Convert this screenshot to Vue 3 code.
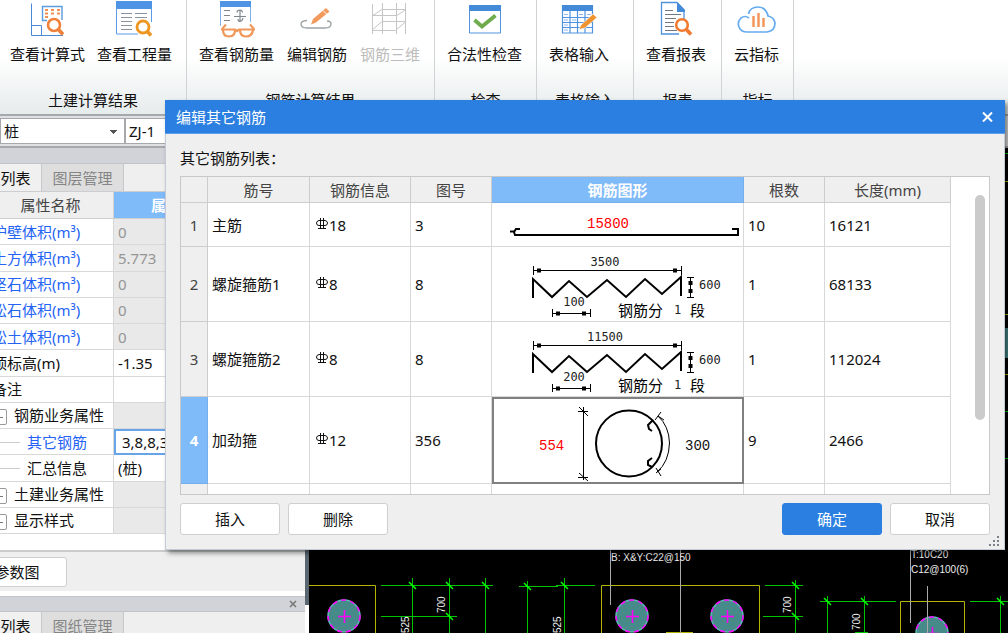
<script setup>
import { ref } from 'vue'

const ribbon = [
  { title: '土建计算结果', cls: 'g-calc', items: [
    { icon: 'formula', label: '查看计算式' },
    { icon: 'quantity', label: '查看工程量' },
  ] },
  { title: '钢筋计算结果', cls: 'g-rebar', items: [
    { icon: 'glasses', label: '查看钢筋量' },
    { icon: 'edit', label: '编辑钢筋' },
    { icon: 'mesh', label: '钢筋三维', disabled: true },
  ] },
  { title: '检查', cls: 'g-check', items: [{ icon: 'check', label: '合法性检查' }] },
  { title: '表格输入', cls: 'g-table', items: [{ icon: 'table', label: '表格输入' }] },
  { title: '报表', cls: 'g-report', items: [{ icon: 'report', label: '查看报表' }] },
  { title: '指标', cls: 'g-cloud', items: [{ icon: 'cloud', label: '云指标' }] },
]

const props = [
  { name: '护壁体积(m³)', value: '0', link: true, ro: true },
  { name: '土方体积(m³)', value: '5.773', link: true, ro: true },
  { name: '坚石体积(m³)', value: '0', link: true, ro: true },
  { name: '松石体积(m³)', value: '0', link: true, ro: true },
  { name: '松土体积(m³)', value: '0', link: true, ro: true },
  { name: '顶标高(m)', value: '-1.35' },
  { name: '备注', value: '' },
  { name: '钢筋业务属性', value: '', group: true, ro: true },
  { name: '其它钢筋', value: '3,8,8,356', child: true, link: true, active: true },
  { name: '汇总信息', value: '(桩)', child: true },
  { name: '土建业务属性', value: '', group: true, ro: true },
  { name: '显示样式', value: '', group: true, ro: true },
]

const bars = [
  { name: '主筋', dia: '18', fig: '3', count: '10', len: '16121', shape: 'straight', main: '15800' },
  { name: '螺旋箍筋1', dia: '8', fig: '8', count: '1', len: '68133', shape: 'spiral', main: '3500', pitch: '100' },
  { name: '螺旋箍筋2', dia: '8', fig: '8', count: '1', len: '112024', shape: 'spiral', main: '11500', pitch: '200' },
  { name: '加劲箍', dia: '12', fig: '356', count: '9', len: '2466', shape: 'ring', main: '554' },
]
const selected = ref(3)
const component = ref('桩')
const member = ref('ZJ-1')
</script>

<template>
  <div class="app">
    <header class="ribbon">
      <section v-for="g in ribbon" :key="g.title" class="group" :class="g.cls">
        <div class="items">
          <button v-for="it in g.items" :key="it.label" class="tool" :disabled="it.disabled">
            <svg class="icon" viewBox="0 0 38 38" width="38" height="38" fill="none">
              <g v-if="it.icon === 'formula'">
                <path d="M2.500 3.500V35.500H34M2.500 25.500H12.500V35.500" stroke="#4a8ad4" />
                <path d="M18 20.500H13.500V6.500H33V20" stroke="#5b9be0" stroke-width="1.400" />
                <path d="M16 10H19M22 10H25M28 10H31M16 13.500H19M22 13.500H25M28 13.500H31M16 17H19" stroke="#f09050" stroke-width="2" />
                <circle cx="25" cy="25" r="6" stroke="#f0813a" stroke-width="2.600" fill="#fff" />
                <path d="M29 29L34 34.500" stroke="#f0813a" stroke-width="3.600" />
              </g>
              <g v-else-if="it.icon === 'quantity'">
                <path d="M0 1H36V9H0Z" fill="#4f93e4" />
                <path d="M.5 8V34H22M35.500 8V22" stroke="#5b9be8" />
                <path d="M5 13.500H16M19 13.500H31M5 17.500H16M19 17.500H31M5 21.500H16M5 25.500H16M5 29.500H16" stroke="#8a949c" />
                <circle cx="27" cy="27" r="6" stroke="#ee9522" stroke-width="2.800" fill="#fff" />
                <path d="M31 31L35 35.500" stroke="#ee9522" stroke-width="3.600" />
              </g>
              <g v-else-if="it.icon === 'glasses'">
                <path d="M2 1H33V7H2Z" fill="#4f93e4" />
                <path d="M2.500 7V26M32.500 7V22" stroke="#7fb0ec" />
                <path d="M6 10.500H12M6 15.500H12M6 20.500H12M16 16.500H28M22 10V21M19 12.500Q19 10 22 10Q24 10 24.500 12.500M20 19Q20 21.500 22 21.500Q24.500 21 25 18" stroke="#7e868c" stroke-width="1.200" />
                <path d="M8 24.500L4 29M32 24.500L36 29" stroke="#f0975a" stroke-width="2" />
                <path d="M3 29.500H17L19 31L21 29.500H37M5 30Q5 36.500 11 36.500Q17 36.500 17 30M22 30Q22 36.500 28 36.500Q34 36.500 35 30" stroke="#f0975a" stroke-width="2.200" />
              </g>
              <g v-else-if="it.icon === 'edit'">
                <path d="M9 20.500Q3 21 3 24Q3 28 9 28H27Q33 28 33 24Q33 21 29 21" stroke="#9aa2a6" stroke-width="1.300" />
                <path d="M13 24.500L15 19L28 8L31.500 11.500L18 22.500Z" fill="#f29a5c" />
                <path d="M25 10.500L29 14.500" stroke="#fff" />
              </g>
              <g v-else-if="it.icon === 'mesh'" stroke="#c6c6c6">
                <path d="M1.500 4V34M11.500 3V34M25.500 3V34M34.500 3V34M1 15.500H25M1 30.500H25M11 9.500H35M11 21.500H35M1 16L11 9.500M1 30L11 21.500M25 16L35 9.500M25 30L35 21.500" />
              </g>
              <g v-else-if="it.icon === 'check'">
                <path d="M3.500 5.500H34.500V33H3.500Z" fill="#fff" stroke="#5293de" />
                <path d="M3 5H35V11H3Z" fill="#438ad8" />
                <path d="M8.500 20L16 26.500L29.500 15.500" stroke="#6fac4d" stroke-width="3.800" />
              </g>
              <g v-else-if="it.icon === 'table'">
                <path d="M2.500 5.500H32.500V33H2.500ZM2 17.500H33M2 22.500H33M2 27.500H33M10 11V33M17.500 11V33M25 11V33" fill="#fff" stroke="#4f93e0" stroke-width="1.200" />
                <path d="M2 5H33V11H2Z" fill="#438ad8" />
                <path d="M4 14.500H8M4 20H8M4 25H8M4 30H8M12 20H16M19 14.500H23M27 14.500H31" stroke="#8db8ed" />
                <path d="M19 29.500L21 25L33 14L37 17.500L25 28Z" fill="#ef9230" stroke="#fff" stroke-width=".6" />
              </g>
              <g v-else-if="it.icon === 'report'">
                <path d="M27 20V10L20 2.500H4.500V34H22" fill="#fff" stroke="#4f91dc" stroke-width="1.300" />
                <path d="M20 2L28 10V12H20Z" fill="#438ad8" />
                <path d="M8 10.500H16M8 14.500H24M8 18.500H19M8 22.500H17M8 26.500H17M8 30.500H20" stroke="#6f7c86" />
                <circle cx="25" cy="25" r="5.800" stroke="#f07a30" stroke-width="2.600" fill="#fff" />
                <path d="M29 29L34 34.500" stroke="#f07a30" stroke-width="3.600" />
              </g>
              <g v-else>
                <path d="M11 18Q7 15 3 18Q-1 22 1 27Q3 32 9 32H29Q37 31 37 23Q36 17 30 16Q28 7 20 7Q12 7 10.500 14" stroke="#66abf0" stroke-width="1.700" />
                <path d="M15.500 16V27M20.500 13V27M25.500 18V27" stroke="#f29455" stroke-width="2.400" />
              </g>
            </svg>
            <span>{{ it.label }}</span>
          </button>
        </div>
        <div class="group-title">{{ g.title }}</div>
      </section>
    </header>

    <div class="toolbar">
      <select v-model="component" class="combo" aria-label="构件类型"><option>桩</option></select>
      <select v-model="member" class="combo" aria-label="构件名称"><option>ZJ-1</option></select>
    </div>

    <div class="workspace">
      <aside class="side">
        <div class="caption"></div>
        <nav class="tabs">
          <button class="tab current">属性列表</button>
          <button class="tab">图层管理</button>
        </nav>
        <table class="props">
          <thead>
            <tr><th class="c-no"></th><th class="c-name">属性名称</th><th class="c-value">属性值</th><th></th></tr>
          </thead>
          <tbody>
            <tr v-for="p in props" :key="p.name">
              <td></td>
              <td :class="{ link: p.link, parent: p.group, child: p.child }">
                <button v-if="p.group" class="fold" :aria-label="p.name"></button>
                <i v-if="p.child" class="branch"></i>{{ p.name }}
              </td>
              <td :class="{ ro: p.ro, active: p.active }">{{ p.value }}</td>
              <td :class="{ ro: p.ro }"></td>
            </tr>
          </tbody>
        </table>
        <div class="blank"></div>
        <div class="side-foot"><button class="btn">参数图</button></div>
        <div class="caption lower"><button class="mini-close" aria-label="关闭">
          <svg width="8" height="8" viewBox="0 0 8 8"><path d="M1 1L7 7M7 1L1 7" stroke="#777" stroke-width="1.600" /></svg>
        </button></div>
        <nav class="tabs">
          <button class="tab current">构件列表</button>
          <button class="tab">图纸管理</button>
        </nav>
      </aside>
      <div class="splitter"></div>
      <main class="canvas">
        <svg width="699" height="485" viewBox="309 148 699 485" fill="none">
          <g stroke="#b4b400">
            <path d="M309 585.500H375.500V633M601.500 633V585.500H759.500V633M900.500 633V601.500H964.500V633M666 632.500H693M1004 181.500H1008M1004 314.500H1008M1004 374.500H1008" />
          </g>
          <g stroke="#00c400">
            <path d="M381 585.500H493M412.500 578V633M449.500 578V633M485.500 578V633M381 616.500H457M519 586.500H558M556 585.500H595M527.500 581V633M564.500 578V633" />
            <path d="M765 585.500H803M795.500 580V633M763 616.500H803M820 601.500H896M827.500 596V633M864.500 596V633M855 632.500H868M970 601.500H1008M1000.500 596V633M1004 153.500H1008M1004 411.500H1008M1004 458.500H1008" />
            <path d="M409 582L416 589M446 582L453 589M482 582L489 589M446 613L453 620M524 583L531 590M561 582L568 589M792 582L799 589M792 613L799 620M824 598L831 605M861 598L868 605M997 598L1004 605" stroke="#00ff00" stroke-width="1.500" />
          </g>
          <g v-for="c in [[344, 616], [632, 616], [727, 616], [932, 633]]" :key="c[0]">
            <circle :cx="c[0]" :cy="c[1]" r="16" fill="#478a8a" stroke="#60b8b8" stroke-width="1.500" />
            <circle :cx="c[0]" :cy="c[1]" r="16" stroke="#f0f" stroke-width="1.500" stroke-dasharray="5 4" />
            <path :d="`M${c[0] - 6} ${c[1] + .5}h13M${c[0] + .5} ${c[1] - 6}v13`" stroke="#f0f" stroke-width="1.500" />
          </g>
          <path d="M610.500 548V605M680.500 548V633M910.500 548V623M927.500 586V633" stroke="#aaa" />
          <path d="M1004 328H1008V358H1004Z" fill="#478a8a" />
          <g class="cad">
            <text x="611" y="561">B: X&amp;Y:C22@150</text>
            <text x="911" y="558">T:10C20</text>
            <text x="911" y="573">C12@100(6)</text>
            <text transform="translate(445 613) rotate(-90)">700</text>
            <text transform="translate(409 633) rotate(-90)">525</text>
            <text transform="translate(561 633) rotate(-90)">525</text>
            <text transform="translate(791 613) rotate(-90)">700</text>
            <text transform="translate(860 630) rotate(-90)">700</text>
          </g>
        </svg>
      </main>
    </div>

    <div class="dialog" role="dialog" aria-label="编辑其它钢筋">
      <div class="titlebar">
        <span>编辑其它钢筋</span>
        <button class="close" aria-label="关闭">
          <svg width="11" height="10" viewBox="0 0 11 10"><path d="M1 .5L10 9.500M10 .5L1 9.500" stroke="#fff" stroke-width="2" /></svg>
        </button>
      </div>
      <div class="body">
        <div class="list-label">其它钢筋列表：</div>
        <div class="frame">
          <table class="bars">
            <thead>
              <tr>
                <th class="w-no"></th><th class="w-name">筋号</th><th class="w-info">钢筋信息</th><th class="w-fig">图号</th>
                <th class="w-shape hot">钢筋图形</th><th class="w-count">根数</th><th class="w-len">长度(mm)</th>
              </tr>
            </thead>
            <tbody>
              <tr v-for="(b, i) in bars" :key="b.name" :class="b.shape" @click="selected = i">
                <th :class="{ hot: i === selected }">{{ i + 1 }}</th>
                <td>{{ b.name }}</td>
                <td>
                  <svg class="grade" width="12" height="12" viewBox="0 0 12 12" fill="none" stroke="#111">
                    <path d="M4.500 0V11M7.500 0V11M2 10.500H10M3 2.500H9Q11.500 3 11.500 5Q11.500 7.500 9 7.500H3Q.5 7.500 .5 5Q.5 3 3 2.500Z" />
                  </svg>{{ b.dia }}
                </td>
                <td>{{ b.fig }}</td>
                <td class="figure" :class="{ focus: i === selected }">
                  <svg v-if="b.shape === 'straight'" width="251" height="43" viewBox="492 203 251 43" fill="none">
                    <text class="big red" x="608" y="228" text-anchor="middle">{{ b.main }}</text>
                    <path d="M520 229H516L514 232L515 235H738V229H732M510 231.500H515" stroke="#000" stroke-width="2" />
                  </svg>
                  <svg v-else-if="b.shape === 'spiral'" width="251" height="74" viewBox="492 247 251 74" fill="none">
                    <text class="small" x="605" y="266" text-anchor="middle">{{ b.main }}</text>
                    <path d="M533.500 266V275M681.500 266V275M533 270.500H682M552.500 309V317M590.500 309V317M552 313.500H591M687 277.500H694M687 297.500H694M690.500 277V297" stroke="#000" />
                    <path d="M537 270.500H541M673 270.500H677M556 313.500H560M582 313.500H586M690.500 281V285M690.500 289V293" stroke="#000" stroke-width="4" />
                    <path d="M533 298V279L552 297L569 281L587 297L607 280L626 297L645 279L662 294L681 277V296" stroke="#000" stroke-width="2" />
                    <text class="small" x="574" y="306" text-anchor="middle">{{ b.pitch }}</text>
                    <text class="small" x="699" y="289">600</text>
                    <text class="cjk" x="618" y="316">钢筋分</text>
                    <text class="small" x="674" y="314">1</text>
                    <text class="cjk" x="690" y="316">段</text>
                  </svg>
                  <svg v-else width="247" height="82" viewBox="494 399 247 82" fill="none">
                    <text class="big red" x="539" y="449">{{ b.main }}</text>
                    <text class="big" x="685" y="449">300</text>
                    <path d="M583.500 406V479M578 410.500H588M578 476.500H588M579 406L588 415M579 472L588 480M658 415Q669 425 669.500 442Q669 461 657 471M655 419L661 411M656 467L661 475M658 415L664 419M656 472L661 468" stroke="#000" />
                    <circle cx="629" cy="442.500" r="33" stroke="#000" stroke-width="2" />
                    <path d="M653 419L648 424L649 428L652 430M652 457L648 460V464L652 466" stroke="#000" stroke-width="2" />
                  </svg>
                </td>
                <td>{{ b.count }}</td>
                <td>{{ b.len }}</td>
              </tr>
              <tr class="next"><th></th><td></td><td></td><td></td><td></td><td></td><td></td></tr>
            </tbody>
          </table>
          <div class="scroll"><div class="thumb"></div></div>
        </div>
        <div class="actions">
          <button class="btn">插入</button>
          <button class="btn">删除</button>
          <span class="spring"></span>
          <button class="btn primary">确定</button>
          <button class="btn">取消</button>
        </div>
      </div>
      <svg class="grip" width="12" height="12" viewBox="0 0 12 12"><path d="M8 1h2v2h-2zM4 5h2v2h-2zM8 5h2v2h-2zM0 9h2v2h-2zM4 9h2v2h-2zM8 9h2v2h-2z" fill="#7d8087" /></svg>
    </div>
  </div>
</template>

<style>
body { margin: 0; overflow: hidden; }
</style>

<style scoped>
.app {
  position: relative;
  display: flex;
  flex-direction: column;
  height: 100vh;
  overflow: hidden;
  background: #f0f0f0;
  color: #111;
  font: 15px/20px "Noto Sans", "Noto Sans CJK SC", sans-serif;
}
.app * { box-sizing: border-box; }
button, select { font: inherit; color: inherit; padding: 0; border: 0; background: none; }

.ribbon {
  display: flex;
  flex: none;
  height: 114px;
  background: linear-gradient(#fff 0, #fff 50%, #e6ebec 100%);
}
.group {
  display: flex;
  flex-direction: column;
  justify-content: space-between;
  border-right: 1px solid #d0d3d4;
  padding-bottom: 4px;
}
.items { display: flex; gap: 13px; padding-left: 12px; }
.g-calc { width: 187px; }
.g-calc .items { gap: 12px; padding-left: 10px; }
.g-rebar { width: 248px; }
.g-check { width: 102px; }
.g-table { width: 97px; }
.g-report { width: 88px; }
.g-cloud { width: 72px; }
.tool { display: flex; flex-direction: column; align-items: center; gap: 6px; white-space: nowrap; }
.tool:disabled { color: #bcbcbc; }
.icon { display: block; overflow: visible; }
.group-title { text-align: center; }

.toolbar {
  display: flex;
  flex: none;
  height: 34px;
  padding: 2px 0;
  border-top: 2px solid #a5a8ad;
  border-bottom: 2px solid #a5a8ad;
  background: #e0e0e2;
}
.combo {
  appearance: none;
  width: 125px;
  border: 1px solid #a6a8ab;
  border-radius: 0;
  padding-left: 3px;
  background-color: #fff;
}
.combo:first-child {
  background-image: linear-gradient(to bottom left, #555 50%, transparent 50%), linear-gradient(to bottom right, #555 50%, transparent 50%);
  background-repeat: no-repeat;
  background-size: 4px 4px;
  background-position: 109px 11px, 113px 11px;
}

.workspace { display: flex; flex: 1; min-height: 0; }
.side { display: flex; flex-direction: column; flex: none; width: 345px; margin-left: -40px; }
.caption { flex: none; height: 16px; background: #d2d3d8; border-bottom: 1px solid #c2c4c9; }
.caption.lower { display: flex; justify-content: flex-end; align-items: center; padding-right: 8px; border-top: 1px solid #c2c4c9; }
.mini-close { display: flex; }
.tabs { display: flex; flex: none; height: 28px; background: #efefef; border-bottom: 1px solid #cbcdd0; }
.tab { width: 82px; border-right: 1px solid #c6c8cb; background: #dedede; color: #858585; }
.tab.current { background: #f0f0f0; color: #111; }

.props { width: 100%; height: 342px; flex: none; table-layout: fixed; border-collapse: separate; border-spacing: 0; background: #fff; }
.props th { height: 27px; padding: 0; font-weight: 400; color: #444; background: #efefef; border-right: 1px solid #d2d2d2; border-bottom: 1px solid #cfcfcf; }
.props .c-no { width: 28px; }
.props .c-name { width: 126px; }
.props .c-value { width: 120px; background: #7fbaf9; color: #fff; font-weight: 700; }
.props td { height: 26px; padding: 0 0 0 4px; border-right: 1px solid #d8d8d8; border-bottom: 1px solid #d8d8d8; white-space: nowrap; overflow: hidden; }
.props .link { color: #2563f5; }
.props .ro { background: #e9e9e9; color: #959595; }
.props .active { border: 2px solid #66a5ea; padding-left: 6px; }
.props .parent { padding-left: 3px; }
.props .child { padding-left: 0; }
.fold {
  display: inline-block;
  width: 16px;
  height: 16px;
  margin-right: 7px;
  border: 1px solid #999;
  border-radius: 2px;
  vertical-align: -3px;
  background: linear-gradient(#777, #777) no-repeat center / 8px 1px;
}
.branch { display: inline-block; width: 32px; height: 1px; margin-right: 7px; vertical-align: 5px; background: #ccc; }
.blank { flex: none; height: 18px; background: #fff; border-bottom: 2px solid #ccc; }
.side-foot { flex: none; height: 44px; padding: 5px 0 0 7px; background: #efefef; border-bottom: 5px solid #fff; }
.splitter { width: 4px; flex: none; background: #5a6670; border-bottom: 28px solid #fff; }
.canvas { flex: 1; min-width: 0; overflow: hidden; background: #000; }
.canvas svg { display: block; }
.cad { fill: #eee; font-family: "Liberation Sans Narrow", "Liberation Sans", sans-serif; font-size: 10px; }

.dialog {
  position: absolute;
  left: 165px;
  right: 3px;
  top: 100px;
  border: 1px solid #c3cbd6;
  border-top: 0;
  background: #efefef;
  box-shadow: 3px 3px 5px rgba(0, 0, 0, .45);
}
.titlebar {
  display: flex;
  align-items: center;
  justify-content: space-between;
  height: 34px;
  margin: 0 -1px;
  padding: 0 12px 0 11px;
  background: #2b7fe1;
  border-bottom: 1px solid #5c9ee9;
  color: #fff;
}
.close { display: flex; }
.body { display: flex; flex-direction: column; padding: 12px 14px 14px; }
.list-label { line-height: 24px; margin-bottom: 6px; }
.frame { display: flex; height: 319px; border: 1px solid #c8c8c8; background: #fff; overflow: hidden; }
.scroll { flex: 1; display: flex; justify-content: flex-end; padding: 18px 4px 0 0; }
.thumb { width: 10px; height: 225px; border-radius: 5px; background: #cbcbcb; }

.bars { flex: none; width: 770px; table-layout: fixed; border-collapse: separate; border-spacing: 0; }
.bars th { padding: 0; font-weight: 400; color: #444; background: #efefef; border-right: 1px solid #cdcdcd; border-bottom: 1px solid #cdcdcd; }
.bars td { padding: 0 0 0 4px; border-right: 1px solid #d8d8d8; border-bottom: 1px solid #d8d8d8; }
.bars thead th { height: 26px; }
.bars .hot { background: #7fbaf9; color: #fff; font-weight: 700; border-color: #76aeea; }
.w-no { width: 27px; }
.w-name { width: 102px; }
.w-info { width: 101px; }
.w-fig { width: 81px; }
.w-shape { width: 252px; }
.w-count { width: 81px; }
.w-len { width: 126px; }
.straight { height: 44px; }
.spiral { height: 75px; }
.ring { height: 87px; }
.next { height: 20px; }
.bars .figure { padding: 0; }
.bars .focus { border: 2px solid #808080; }
.figure svg { display: block; }
.grade { margin-left: 2px; margin-right: 1px; vertical-align: 1px; }
.big { font: 14px "Liberation Mono", monospace; fill: #111; }
.red { fill: #f00; }
.small { font: 12px "DejaVu Sans Mono", monospace; fill: #222; }
.cjk { font: 15px "Noto Sans CJK SC", sans-serif; fill: #000; }

.actions { display: flex; gap: 8px; margin-top: 8px; }
.spring { flex: 1; }
.btn { width: 100px; height: 32px; border: 1px solid #cfcfcf; border-radius: 3px; background: #fff; }
.side-foot .btn { height: 30px; }
.btn.primary { background: #2b7fe1; border-color: #2b7fe1; color: #fff; }
.grip { position: absolute; right: 3px; bottom: 2px; }
</style>
